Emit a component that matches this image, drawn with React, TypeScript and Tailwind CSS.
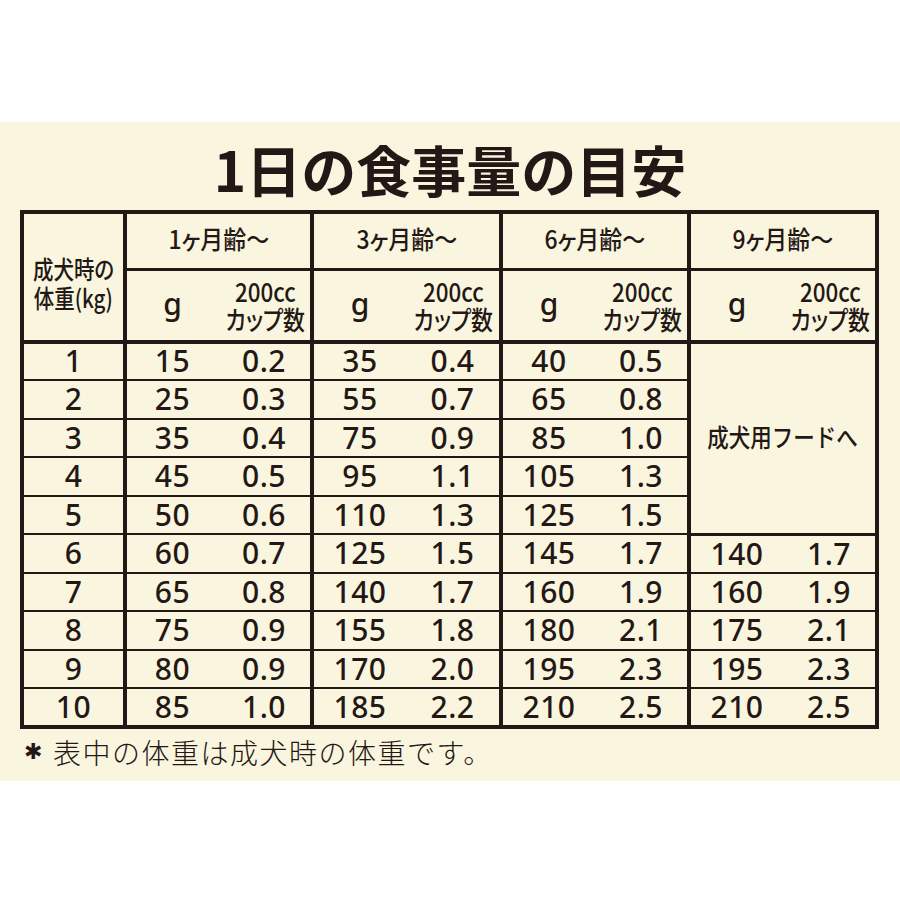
import React from 'react'

// 1日の食事量の目安 — feeding chart (g / 200cc cups) by adult body weight
type Cell = [string, string]

const rows: { kg: string; cells: Cell[] }[] = [
  { kg: '1', cells: [['15', '0.2'], ['35', '0.4'], ['40', '0.5']] },
  { kg: '2', cells: [['25', '0.3'], ['55', '0.7'], ['65', '0.8']] },
  { kg: '3', cells: [['35', '0.4'], ['75', '0.9'], ['85', '1.0']] },
  { kg: '4', cells: [['45', '0.5'], ['95', '1.1'], ['105', '1.3']] },
  { kg: '5', cells: [['50', '0.6'], ['110', '1.3'], ['125', '1.5']] },
  { kg: '6', cells: [['60', '0.7'], ['125', '1.5'], ['145', '1.7'], ['140', '1.7']] },
  { kg: '7', cells: [['65', '0.8'], ['140', '1.7'], ['160', '1.9'], ['160', '1.9']] },
  { kg: '8', cells: [['75', '0.9'], ['155', '1.8'], ['180', '2.1'], ['175', '2.1']] },
  { kg: '9', cells: [['80', '0.9'], ['170', '2.0'], ['195', '2.3'], ['195', '2.3']] },
  { kg: '10', cells: [['85', '1.0'], ['185', '2.2'], ['210', '2.5'], ['210', '2.5']] },
]

const ages = ['1ヶ月齢～', '3ヶ月齢～', '6ヶ月齢～', '9ヶ月齢～']

const num = "font-['Noto_Sans',sans-serif] text-[30px] font-medium leading-none tracking-[0.5px] text-center"
const jp = "font-['Noto_Sans_CJK_JP',sans-serif]"

function CupHeader() {
  return (
    <div className={`${jp} flex flex-col items-center whitespace-nowrap pl-[2px] text-[26px] font-medium leading-[28px]`}>
      <span className="inline-block scale-x-[0.86]">200cc</span>
      <span className="inline-block scale-x-[0.84] [font-feature-settings:'palt']">カップ数</span>
    </div>
  )
}

export default function App() {
  return (
    <div className="min-h-[900px] w-[900px] bg-white text-[#231815]">
      <div className="h-[122px]" />
      <div className="flex flex-col bg-[#faf5df] pb-[15px] pl-[20px] pt-[19px]">
        <h1 className={`${jp} w-[860px] text-center text-[55px] font-bold leading-none`}>1日の食事量の目安</h1>

        <table className="mt-[14px] w-[859px] table-fixed border-collapse border-4 border-[#231815]">
          <colgroup>
            <col className="w-[103px]" />
            <col className="w-[93px]" />
            <col className="w-[94px]" />
            <col className="w-[94px]" />
            <col className="w-[95px]" />
            <col className="w-[94px]" />
            <col className="w-[94px]" />
            <col className="w-[94px]" />
            <col className="w-[94px]" />
          </colgroup>
          <thead>
            <tr className="h-[57px]">
              <th rowSpan={2} className="border-4 border-[#231815] p-0 align-middle">
                <div
                  className={`${jp} flex flex-col items-center whitespace-nowrap pt-[12px] text-[25px] font-medium leading-[29px] [font-feature-settings:'palt']`}
                >
                  <span className="inline-block scale-x-[0.82]">成犬時の</span>
                  <span className="inline-block scale-x-[0.82]">体重(kg)</span>
                </div>
              </th>
              {ages.map((a) => (
                <th key={a} colSpan={2} className="border-x-4 border-b-[3px] border-[#231815] p-0 align-middle">
                  <span
                    className={`${jp} inline-block scale-x-[0.92] whitespace-nowrap text-[25px] font-medium leading-none [font-feature-settings:'palt']`}
                  >
                    {a}
                  </span>
                </th>
              ))}
            </tr>
            <tr className="h-[72.5px]">
              {ages.map((a) => (
                <React.Fragment key={a}>
                  <th className="border-b-4 border-l-4 border-[#231815] p-0 align-middle">
                    <span className="font-['Noto_Sans',sans-serif] text-[30px] font-medium leading-none">g</span>
                  </th>
                  <th className="border-b-4 border-r-4 border-[#231815] p-0 align-middle">
                    <CupHeader />
                  </th>
                </React.Fragment>
              ))}
            </tr>
          </thead>
          <tbody>
            {rows.map((r, i) => (
              <tr key={r.kg} className="h-[38.5px]">
                <td className={`border-y-2 border-r-4 border-[#231815] p-0 ${num}`}>{r.kg}</td>
                {r.cells.map(([g, c], j) => (
                  <React.Fragment key={j}>
                    <td className={`border-y-2 border-l-4 border-[#231815] p-0 ${num}`}>{g}</td>
                    <td className={`border-y-2 border-r-4 border-[#231815] p-0 ${num}`}>{c}</td>
                  </React.Fragment>
                ))}
                {i === 0 ? (
                  <td
                    rowSpan={5}
                    colSpan={2}
                    className="border-x-4 border-b-[3px] border-t-2 border-[#231815] p-0 text-center align-middle"
                  >
                    <span className={`${jp} inline-block scale-x-[0.86] whitespace-nowrap text-[25px] font-medium leading-none`}>
                      成犬用フードへ
                    </span>
                  </td>
                ) : null}
              </tr>
            ))}
          </tbody>
        </table>

        <p className={`${jp} mt-[9px] flex items-center pl-[4px] text-[28px] font-light leading-none tracking-[1.5px]`}>
          <span className="inline-block w-[29px] font-['DejaVu_Sans',sans-serif] text-[22px] font-bold">✱</span>
          表中の体重は成犬時の体重です。
        </p>
      </div>
    </div>
  )
}
